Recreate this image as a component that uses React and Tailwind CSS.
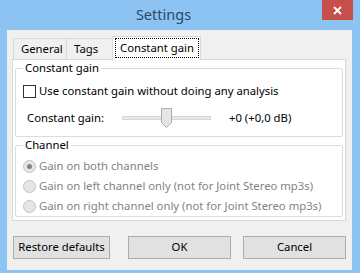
import React, { useState } from 'react';

const font = { fontFamily: '"Noto Sans", "Open Sans", Arial, sans-serif' };

function Tab({ label, active, width }) {
  if (active) {
    return (
      <div className={`relative z-10 -mb-px h-[24px] ${width} pl-[2px] pr-[1px] pt-[1px] bg-white border border-b-0 border-[#d9d9d9] flex`}>
        <span className="flex-1 border border-dotted border-black pl-[4px] leading-[18px] h-[20px]">{label}</span>
      </div>
    );
  }
  return (
    <div className={`h-[21px] ${width} pl-[7px] bg-[#f0f0f0] border border-b-0 border-[#d9d9d9] -mr-px leading-[20px]`}>
      {label}
    </div>
  );
}

function Radio({ label, checked }) {
  return (
    <div className="flex items-center h-[20px]">
      <span className="w-[13px] h-[13px] ml-[7px] mr-[3px] rounded-full border border-[#c3c3c3] bg-[#e6e6e6] flex items-center justify-center">
        {checked && <span className="w-[5px] h-[5px] rounded-full bg-[#838383]" />}
      </span>
      <span className="text-[#838383]">{label}</span>
    </div>
  );
}

function Button({ label, className }) {
  return (
    <button className={`h-[23px] border border-[#adadad] bg-[#e1e1e1] text-black ${className}`}>
      {label}
    </button>
  );
}

export default function App() {
  const [useConstant, setUseConstant] = useState(false);

  return (
    <div className="w-[360px] h-[273px] bg-[#8cc3f3] text-[11.3px] text-black overflow-hidden" style={font}>
      {/* Title bar */}
      <div className="h-[30px] flex items-start">
        <div className="flex-1 text-center pt-[4px] pl-[5px] text-[14.5px] text-[#2a4866] leading-[20px]">Settings</div>
        <div className="w-[31px] h-[20px] mr-[7px] bg-[#c7504b] flex items-center justify-center">
          <svg width="9" height="9" viewBox="0 0 9 9">
            <path d="M1 1 L8 8 M8 1 L1 8" stroke="white" strokeWidth="1.8" />
          </svg>
        </div>
      </div>

      {/* Client area */}
      <div className="ml-[7px] w-[345px] h-[240px] bg-[#f0f0f0] pt-[6px]">
        <div className="flex items-end h-[23px] ml-[6px]">
          <Tab label="General" width="w-[54px]" />
          <Tab label="Tags" width="w-[47px]" />
          <Tab label="Constant gain" width="w-[89px]" active />
        </div>

        <div className="ml-[5px] w-[334px] h-[162px] bg-white border border-[#d9d9d9] pl-[2px]">
          <fieldset className="w-[328px] h-[77px] border border-[#dcdcdc] rounded-[2px]">
            <legend className="ml-[7px] px-[2px] leading-[16px]">Constant gain</legend>
            <label className="flex items-center h-[20px] mt-[5px]">
              <span
                onClick={() => setUseConstant(!useConstant)}
                className="w-[13px] h-[13px] ml-[7px] mr-[3px] border border-[#333333] bg-white"
              />
              <span>Use constant gain without doing any analysis</span>
            </label>
            <div className="flex items-center h-[20px] mt-[7px]">
              <span className="ml-[11px] w-[95px]">Constant gain:</span>
              <div className="relative w-[89px] h-[20px] flex items-center">
                <div className="w-full h-[4px] bg-[#e7eaea] border border-[#d6d6d6]" />
                <svg className="absolute left-[39px] top-[0px]" width="11" height="20" viewBox="0 0 11 20">
                  <path d="M0.5 0.5 H10.5 V14.5 L5.5 19.5 L0.5 14.5 Z" fill="#e6e6e6" stroke="#acacac" />
                </svg>
              </div>
              <span className="ml-[18px]">+0 (+0,0 dB)</span>
            </div>
          </fieldset>

          <fieldset className="w-[328px] h-[80px] border border-[#dcdcdc] rounded-[2px]">
            <legend className="ml-[7px] px-[2px] leading-[16px]">Channel</legend>
            <div className="mt-[3px]">
              <Radio label="Gain on both channels" checked />
              <Radio label="Gain on left channel only (not for Joint Stereo mp3s)" />
              <Radio label="Gain on right channel only (not for Joint Stereo mp3s)" />
            </div>
          </fieldset>
        </div>

        <div className="flex ml-[6px] mt-[15px]">
          <Button label="Restore defaults" className="w-[97px]" />
          <Button label="OK" className="w-[103px] ml-[18px]" />
          <Button label="Cancel" className="w-[103px] ml-[12px]" />
        </div>
      </div>
    </div>
  );
}
